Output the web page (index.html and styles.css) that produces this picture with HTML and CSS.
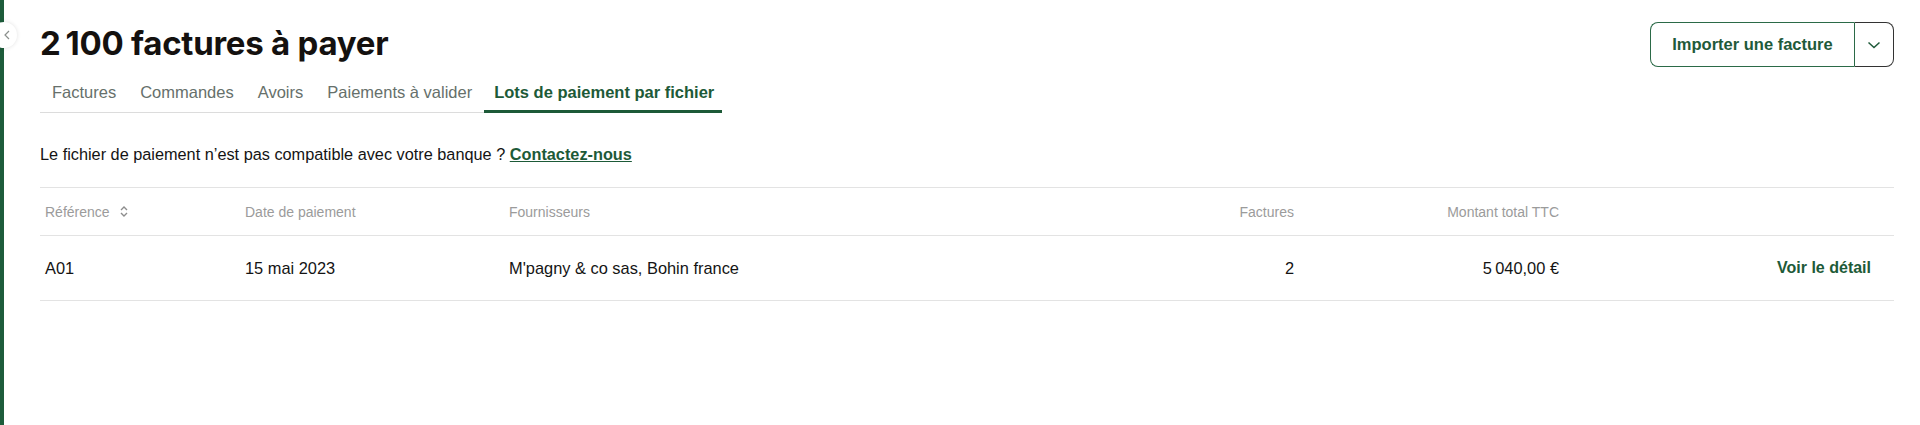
FILE: index.html
```html
<!DOCTYPE html>
<html lang="fr">
<head>
<meta charset="utf-8">
<title>Lots de paiement par fichier</title>
<link rel="stylesheet" href="styles.css">
</head>
<body>
<div class="app">
  <aside class="rail">
    <button class="collapse" aria-label="Réduire">
      <svg width="8" height="10" viewBox="0 0 8 10"><path d="M6 1 L2 5 L6 9" fill="none" stroke="#8a8f8c" stroke-width="1.2"/></svg>
    </button>
  </aside>
  <main class="main">
    <header class="head">
      <div class="head-left">
        <h1 class="title">2&#8239;100 factures à payer</h1>
        <nav class="tabs">
          <a class="tab">Factures</a>
          <a class="tab">Commandes</a>
          <a class="tab">Avoirs</a>
          <a class="tab">Paiements à valider</a>
          <a class="tab active">Lots de paiement par fichier</a>
        </nav>
      </div>
      <div class="split">
        <button class="split-main">Importer une facture</button>
        <button class="split-toggle" aria-label="Plus">
          <svg width="14" height="8" viewBox="0 0 14 8"><path d="M1.5 1.5 L7 6.5 L12.5 1.5" fill="none" stroke="#1f5a3a" stroke-width="1.5"/></svg>
        </button>
      </div>
    </header>

    <p class="info">Le fichier de paiement n’est pas compatible avec votre banque ? <a class="link">Contactez-nous</a></p>

    <div class="table">
      <div class="row thead">
        <div class="cell">Référence
          <svg class="sort" width="8" height="11" viewBox="0 0 8 11"><path d="M1 4 L4 1 L7 4 M1 7 L4 10 L7 7" fill="none" stroke="#8d8d8d" stroke-width="1.4"/></svg>
        </div>
        <div class="cell">Date de paiement</div>
        <div class="cell">Fournisseurs</div>
        <div class="cell num">Factures</div>
        <div class="cell num">Montant total TTC</div>
        <div class="cell"></div>
      </div>
      <div class="row tbody">
        <div class="cell">A01</div>
        <div class="cell">15 mai 2023</div>
        <div class="cell">M'pagny &amp; co sas, Bohin france</div>
        <div class="cell num">2</div>
        <div class="cell num">5&#8239;040,00&nbsp;€</div>
        <div class="cell action"><a class="detail">Voir le détail</a></div>
      </div>
    </div>
  </main>
</div>
</body>
</html>
```

FILE: styles.css
```css
* { box-sizing: border-box; }
html, body { margin: 0; padding: 0; background: #fff; }
body {
  font-family: "Liberation Sans", Arial, sans-serif;
  color: #141414;
  height: 425px;
  overflow: hidden;
}
.app {
  display: flex;
  min-height: 425px;
}
.rail {
  width: 4px;
  flex: none;
  background: #1d5c3b;
  position: relative;
}
.collapse {
  position: absolute;
  left: -9px;
  top: 22px;
  width: 26px;
  height: 26px;
  border-radius: 50%;
  border: none;
  background: #fff;
  box-shadow: 0 0 4px rgba(0,0,0,0.12);
  display: flex;
  align-items: center;
  justify-content: center;
  padding: 0 0 0 6px;
}
.main {
  flex: 1;
  padding: 0 26px 0 36px;
}
.head {
  display: flex;
  justify-content: space-between;
  align-items: flex-start;
}
.title {
  margin: 0;
  padding-top: 22px;
  font-family: Inter, "Noto Sans", sans-serif;
  font-weight: 700;
  font-size: 33px;
  line-height: 42px;
  letter-spacing: -0.25px;
  color: #14110f;
}
.tabs {
  display: flex;
  width: fit-content;
  border-bottom: 1px solid #dcdcdc;
  margin-top: 18px;
}
.tab {
  padding: 0 12px 8px 12px;
  font-size: 16.5px;
  line-height: 20px;
  color: #66706b;
  border-bottom: 2px solid transparent;
  margin-bottom: -1px;
}
.tab.active {
  color: #1d5a38;
  font-weight: 700;
  border-bottom: 3px solid #1d5a38;
  padding-left: 10px;
  padding-right: 8px;
}
.split {
  margin-top: 22px;
  display: flex;
  height: 45px;
}
.split-main {
  width: 204px;
  border: 1px solid #2b6a47;
  border-right: none;
  border-radius: 8px 0 0 8px;
  background: #fff;
  font-family: "Liberation Sans", Arial, sans-serif;
  font-weight: 700;
  font-size: 16.5px;
  color: #1f5a3a;
  padding: 0;
}
.split-toggle {
  width: 40px;
  border: 1px solid #333;
  border-left: 1px solid #2b6a47;
  border-radius: 0 8px 8px 0;
  background: #fff;
  display: flex;
  align-items: center;
  justify-content: center;
  padding: 0;
}
.info {
  margin: 31px 0 0 0;
  font-size: 16.3px;
  line-height: 20px;
  color: #141414;
}
.link {
  color: #1d5a38;
  font-weight: 700;
  text-decoration: underline;
}
.table {
  margin-top: 23px;
  border-top: 1px solid #e3e3e3;
}
.row {
  display: grid;
  grid-template-columns: 200px 264px 645px 150px 265px 1fr;
  align-items: center;
  border-bottom: 1px solid #e3e3e3;
}
.thead {
  height: 48px;
  font-size: 14px;
  color: #9b9b9b;
}
.tbody {
  height: 65px;
  font-size: 16.4px;
  color: #141414;
}
.cell {
  padding: 0 5px;
  display: flex;
  align-items: center;
}
.cell.num { justify-content: flex-end; }
.cell.action { justify-content: flex-end; padding-right: 23px; }
.sort { margin-left: 10px; }
.detail {
  color: #1d5a38;
  font-weight: 700;
  font-size: 16px;
}
```
